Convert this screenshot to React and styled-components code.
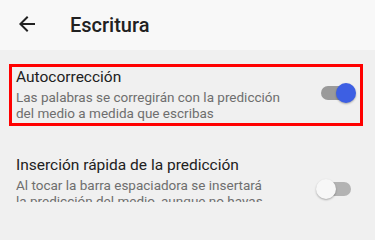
import React from "react";
import styled, { createGlobalStyle } from "styled-components";

const Global = createGlobalStyle`
  html, body { margin: 0; padding: 0; background: #f0f0f0; overflow: hidden; }
  body { font-family: Roboto, "Noto Sans", Arial, sans-serif; }
`;

const Page = styled.div`
  width: 375px;
  height: 202px;
  background: #f0f0f0;
  overflow: hidden;
`;

const Header = styled.header`
  height: 50px;
  background: #f8f8f8;
  display: flex;
  align-items: center;
  padding-left: 15px;
  box-sizing: border-box;
`;

const BackButton = styled.button`
  width: 24px;
  height: 24px;
  padding: 0;
  border: none;
  background: none;
  display: flex;
  margin-top: -2px;
  color: #212121;
`;

const Title = styled.h1`
  margin: 0 0 0 31px;
  font-size: 20px;
  font-weight: 500;
  line-height: 24px;
  color: #212121;
`;

const List = styled.div`
  display: flex;
  flex-direction: column;
  gap: 26px;
  padding: 14px 12px 0 9px;
`;

const Item = styled.div`
  display: flex;
  align-items: center;
  justify-content: space-between;
  border: 3px solid ${(p) => (p.$highlight ? "#ff0000" : "transparent")};
  padding: 0 4px 2px 4px;
`;

const Texts = styled.div`
  display: flex;
  flex-direction: column;
  gap: 2px;
`;

const ItemTitle = styled.div`
  font-size: 15.5px;
  line-height: 20px;
  color: #212121;
`;

const ItemSub = styled.div`
  font-size: 13.5px;
  line-height: 16px;
  color: #6e6e6e;
  white-space: nowrap;
`;

const Switch = styled.div`
  position: relative;
  width: 40px;
  height: 20px;
  flex-shrink: 0;
  margin-top: -2px;
`;

const Track = styled.div`
  position: absolute;
  left: 5px;
  top: 3px;
  width: 30px;
  height: 14px;
  border-radius: 7px;
  background: ${(p) => (p.$on ? "#9a9a9a" : "#b3b3b3")};
`;

const Thumb = styled.div`
  position: absolute;
  top: 0;
  left: ${(p) => (p.$on ? "20px" : "0")};
  width: 20px;
  height: 20px;
  border-radius: 50%;
  background: ${(p) => (p.$on ? "#3d5fe3" : "#f7f7f7")};
  box-shadow: 0 1px 2px rgba(0, 0, 0, 0.3);
`;

const Toggle = ({ on }) => (
  <Switch>
    <Track $on={on} />
    <Thumb $on={on} />
  </Switch>
);

export default function App() {
  return (
    <Page>
      <Global />
      <Header>
        <BackButton aria-label="Atrás">
          <svg width="24" height="24" viewBox="0 0 24 24" fill="currentColor">
            <path d="M20 11H7.83l5.59-5.59L12 4l-8 8 8 8 1.41-1.41L7.83 13H20v-2z" />
          </svg>
        </BackButton>
        <Title>Escritura</Title>
      </Header>
      <List>
        <Item $highlight>
          <Texts>
            <ItemTitle>Autocorrección</ItemTitle>
            <ItemSub>
              Las palabras se corregirán con la predicción
              <br />
              del medio a medida que escribas
            </ItemSub>
          </Texts>
          <Toggle on />
        </Item>
        <Item>
          <Texts>
            <ItemTitle>Inserción rápida de la predicción</ItemTitle>
            <ItemSub>
              Al tocar la barra espaciadora se insertará
              <br />
              la predicción del medio, aunque no hayas
              <br />
              seleccionado ninguna
            </ItemSub>
          </Texts>
          <Toggle />
        </Item>
      </List>
    </Page>
  );
}
